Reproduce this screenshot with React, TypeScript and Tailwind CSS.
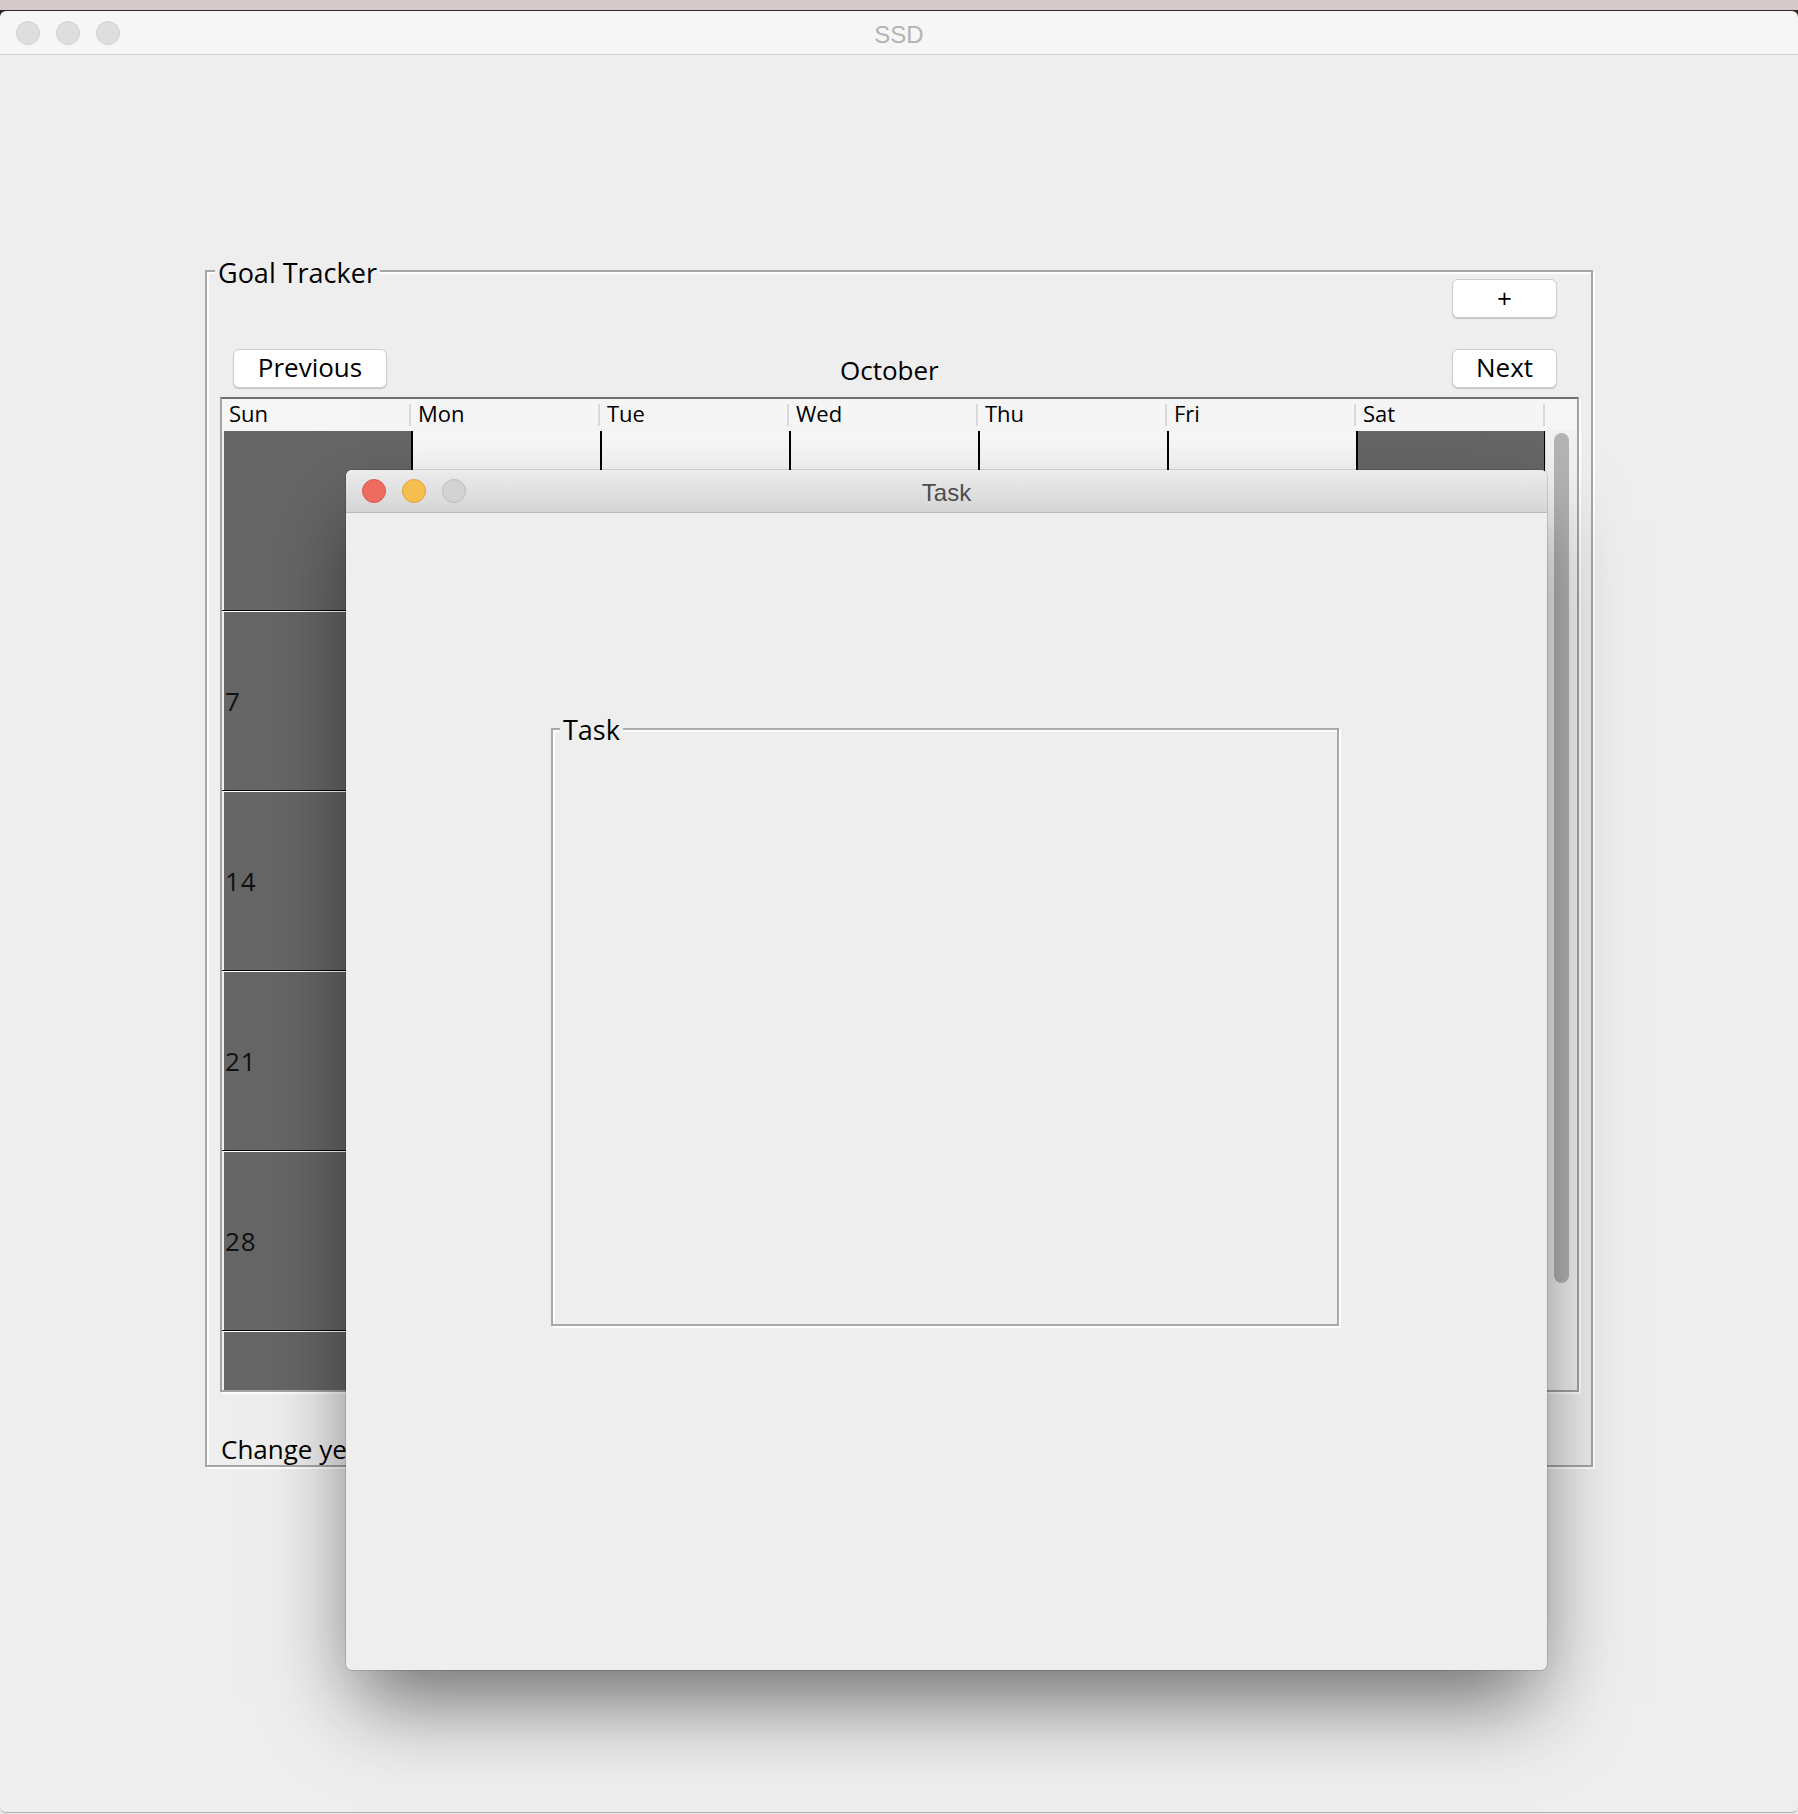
import React from "react";

const FONT = { fontFamily: '"Open Sans", "Noto Sans", sans-serif' };
const TITLE_FONT = { fontFamily: '"Liberation Sans", Arial, sans-serif' };

type Cell = { n: string; dark: boolean };

function buildRows(): Cell[][] {
  const rows: Cell[][] = [];
  for (let r = 0; r < 6; r++) {
    const row: Cell[] = [];
    for (let c = 0; c < 7; c++) {
      const date = r * 7 + c;
      const valid = c === 0 && date >= 1 && date <= 31;
      row.push({ n: valid ? String(date) : "", dark: c === 0 || c === 6 });
    }
    rows.push(row);
  }
  return rows;
}

function Button({ label, w, pad }: { label: string; w: string; pad: string }) {
  return (
    <div
      className={`${w} ${pad} h-[39px] rounded-[6px] bg-white border border-[#cdcdcd] shadow-[0_1px_1px_rgba(0,0,0,0.18)] flex items-center justify-center text-[26px] text-black leading-none`}
    >
      {label}
    </div>
  );
}

export default function App() {
  const days = ["Sun", "Mon", "Tue", "Wed", "Thu", "Fri", "Sat"];
  const rows = buildRows();
  const rowHeights = ["h-[179px]", "h-[180px]", "h-[180px]", "h-[180px]", "h-[180px]", "h-[180px]"];

  return (
    <div className="w-[1798px] h-[1814px] relative overflow-hidden bg-[#e9e9e9]" style={FONT}>
      {/* desktop strip */}
      <div className="h-[10px] bg-[#d3cac9]" />
      <div className="h-[1px] bg-[#2b2422]" />
      {/* main window title bar */}
      <div className="bg-[#2b2422]">
        <div className="h-[44px] rounded-t-[6px] bg-[#f6f6f6] border-b border-[#d2d2d2] grid grid-cols-[1fr_auto_1fr] items-center">
          <div className="flex items-center gap-[16px] pl-[16px]">
            <div className="w-[24px] h-[24px] rounded-full bg-[#dedede] border border-[#d0d0d0]" />
            <div className="w-[24px] h-[24px] rounded-full bg-[#dedede] border border-[#d0d0d0]" />
            <div className="w-[24px] h-[24px] rounded-full bg-[#dedede] border border-[#d0d0d0]" />
          </div>
          <div className="text-[24px] text-[#b3b3b3] leading-none pt-[4px]" style={TITLE_FONT}>
            SSD
          </div>
          <div />
        </div>
      </div>

      {/* main window content */}
      <div className="h-[1758px] bg-[#eeeeee] border-b border-[#b0b0b0] rounded-b-[6px] pl-[205px] pt-[215px]">
        {/* Goal Tracker panel */}
        <div className="relative w-[1388px] h-[1197px] border-2 border-[#a6a6a6] shadow-[inset_2px_2px_0_#ffffff,2px_2px_0_#ffffff] flex flex-col pt-[7px] px-[13px]">
          <div className="absolute left-[8px] top-[-15px] px-[3px] bg-[#eeeeee] text-[27px] leading-[32px] text-black">
            Goal Tracker
          </div>

          <div className="flex justify-end pr-[21px]">
            <Button label="+" w="w-[105px]" pad="pb-[2px]" />
          </div>

          <div className="flex items-center mt-[31px]">
            <div className="ml-[13px]">
              <Button label="Previous" w="w-[154px]" pad="pb-[4px]" />
            </div>
            <div className="ml-[453px] text-[26px] leading-none text-black pt-[2px]">October</div>
            <div className="ml-auto mr-[21px]">
              <Button label="Next" w="w-[105px]" pad="pb-[4px]" />
            </div>
          </div>

          {/* table */}
          <div className="mt-[9px] w-[1359px] h-[996px] border-2 border-[#a3a3a3] border-t-[#6f6f6f] shadow-[2px_2px_0_#ffffff] flex flex-col overflow-hidden">
            <div className="flex h-[32px] bg-[#f6f6f6] shrink-0">
              {days.map((d) => (
                <div key={d} className="w-[189px] flex items-center justify-between">
                  <span className="pl-[7px] pb-[4px] text-[22px] leading-none text-black">{d}</span>
                  <div className="w-[2px] h-[22px] bg-[#dadada]" />
                </div>
              ))}
              <div className="w-[32px]" />
            </div>
            <div className="flex flex-1 overflow-hidden">
              <div className="w-[1323px] flex flex-col">
                {rows.map((row, ri) => (
                  <div
                    key={ri}
                    className={`${rowHeights[ri]} shrink-0 flex ${ri > 0 ? "border-t border-black pt-[1px] bg-white" : ""}`}
                  >
                    {row.map((cell, ci) => (
                      <div
                        key={ci}
                        className={`w-[189px] flex items-center ${
                          ci === 0
                            ? "border-l-2 border-[#efefef] bg-[#666666] pl-[1px]"
                            : cell.dark
                            ? "border-l-2 border-black bg-[#666666] pl-[2px]"
                            : "border-l-2 border-black bg-[#f8f8f8] pl-[2px]"
                        } ${ci === 6 ? "border-r border-r-black" : ""}`}
                      >
                        {cell.n ? (
                          <span className="text-[26px] leading-none tracking-[1px] text-[#111111]">{cell.n}</span>
                        ) : null}
                      </div>
                    ))}
                  </div>
                ))}
              </div>
              <div className="w-[32px] bg-[#f1f1f1] border-l border-[#e2e2e2] pl-[8px] pt-[2px]">
                <div className="w-[15px] h-[850px] rounded-full bg-[#b4b4b4]" />
              </div>
            </div>
          </div>

          <div className="mt-[41px] ml-[1px] text-[26px] leading-[32px] text-black">Change year:</div>
        </div>
      </div>

      {/* Task dialog */}
      <div className="absolute left-[346px] top-[470px] w-[1201px] h-[1200px] rounded-[6px] bg-[#eeeeee] shadow-[0_40px_80px_-10px_rgba(0,0,0,0.55),0_0_0_1px_rgba(0,0,0,0.12)] flex flex-col overflow-hidden">
        <div className="h-[43px] shrink-0 bg-gradient-to-b from-[#ececec] to-[#d5d5d5] border-b border-[#b8b8b8] grid grid-cols-[1fr_auto_1fr] items-center">
          <div className="flex items-center gap-[16px] pl-[16px]">
            <div className="w-[24px] h-[24px] rounded-full bg-[#ee6b60] border border-[#d85a4f]" />
            <div className="w-[24px] h-[24px] rounded-full bg-[#f6be4f] border border-[#dfa33a]" />
            <div className="w-[24px] h-[24px] rounded-full bg-[#d3d3d3] border border-[#bdbdbd]" />
          </div>
          <div className="text-[24px] text-[#4d4d4d] leading-none pt-[4px]" style={TITLE_FONT}>
            Task
          </div>
          <div />
        </div>
        <div className="flex-1 pl-[205px] pt-[215px]">
          <div className="relative w-[788px] h-[598px] border-2 border-[#a9a9a9] shadow-[inset_2px_2px_0_#ffffff,2px_2px_0_#ffffff]">
            <div className="absolute left-[7px] top-[-16px] px-[3px] bg-[#eeeeee] text-[27px] leading-[32px] text-black">
              Task
            </div>
          </div>
        </div>
      </div>
    </div>
  );
}
